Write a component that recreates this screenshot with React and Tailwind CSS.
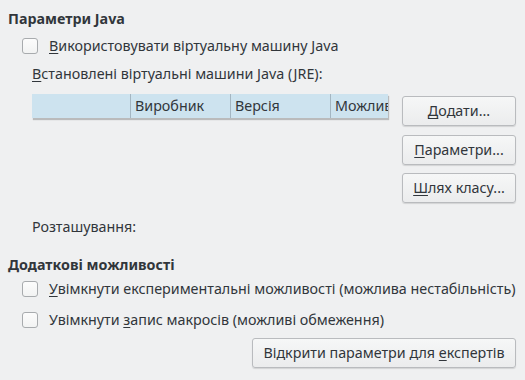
import React from "react";

function Box() {
  return (
    <div className="w-[16px] h-[16px] rounded-[3px] border border-[#a8abae] bg-gradient-to-b from-[#fcfcfc] to-[#f2f3f3] shrink-0" />
  );
}

function Check({ children }) {
  return (
    <div className="flex items-center h-[20px] pl-[14px]">
      <Box />
      <span className="ml-[11px] whitespace-nowrap">{children}</span>
    </div>
  );
}

function Btn({ children, className = "" }) {
  return (
    <div
      className={
        "h-[30px] flex items-center justify-center rounded-[3px] border border-[#b9bbbe] bg-gradient-to-b from-[#f6f7f7] to-[#ebeced] shadow-[0_1px_1px_rgba(0,0,0,0.12)] whitespace-nowrap " +
        className
      }
    >
      <span>{children}</span>
    </div>
  );
}

const U = ({ children }) => (
  <span className="underline underline-offset-[2px] decoration-[1px]">{children}</span>
);

export default function App() {
  return (
    <div
      className="w-[525px] h-[380px] bg-[#eff0f1] text-[#31363b] text-[14.3px] leading-[18px] overflow-hidden pl-[8px] pr-[9px]"
      style={{ fontFamily: '"Noto Sans", "Open Sans", sans-serif' }}
    >
      <div className="h-[18px] mt-[10px] font-bold">Параметри Java</div>
      <div className="mt-[8px]">
        <Check>
          <U>В</U>икористовувати віртуальну машину Java
        </Check>
      </div>
      <div className="pl-[24px]">
        <div className="h-[18px] mt-[9px]">
          <U>В</U>становлені віртуальні машини Java (JRE):
        </div>
        <div className="flex mt-[11px]">
          <div className="w-[356px] h-[24px] bg-[#cde3ef] flex shadow-[1px_2px_1px_rgba(0,0,0,0.22)] overflow-hidden">
            <div className="w-[99px] shrink-0 border-r border-[#a4b6c2]" />
            <div className="w-[100px] shrink-0 border-r border-[#a4b6c2] pl-[4px] flex items-center">Виробник</div>
            <div className="w-[100px] shrink-0 border-r border-[#a4b6c2] pl-[4px] flex items-center">Версія</div>
            <div className="shrink-0 pl-[4px] flex items-center whitespace-nowrap">Можливо</div>
          </div>
          <div className="ml-auto w-[114px] mt-[2px] flex flex-col gap-[8.5px]">
            <Btn>
              <U>Д</U>одати...
            </Btn>
            <Btn>
              <U>П</U>араметри...
            </Btn>
            <Btn>
              <U>Ш</U>лях класу...
            </Btn>
          </div>
        </div>
        <div className="h-[18px] mt-[15px]">Розташування:</div>
      </div>
      <div className="h-[18px] mt-[20px] font-bold">Додаткові можливості</div>
      <div className="mt-[5px]">
        <Check>
          <U>У</U>вімкнути експериментальні можливості (можлива нестабільність)
        </Check>
      </div>
      <div className="mt-[11px]">
        <Check>
          Увімкнути <U>з</U>апис макросів (можливі обмеження)
        </Check>
      </div>
      <div className="flex justify-end mt-[8px]">
        <Btn className="w-[264px]">
          Відкрити параметри для <U>е</U>кспертів
        </Btn>
      </div>
    </div>
  );
}
